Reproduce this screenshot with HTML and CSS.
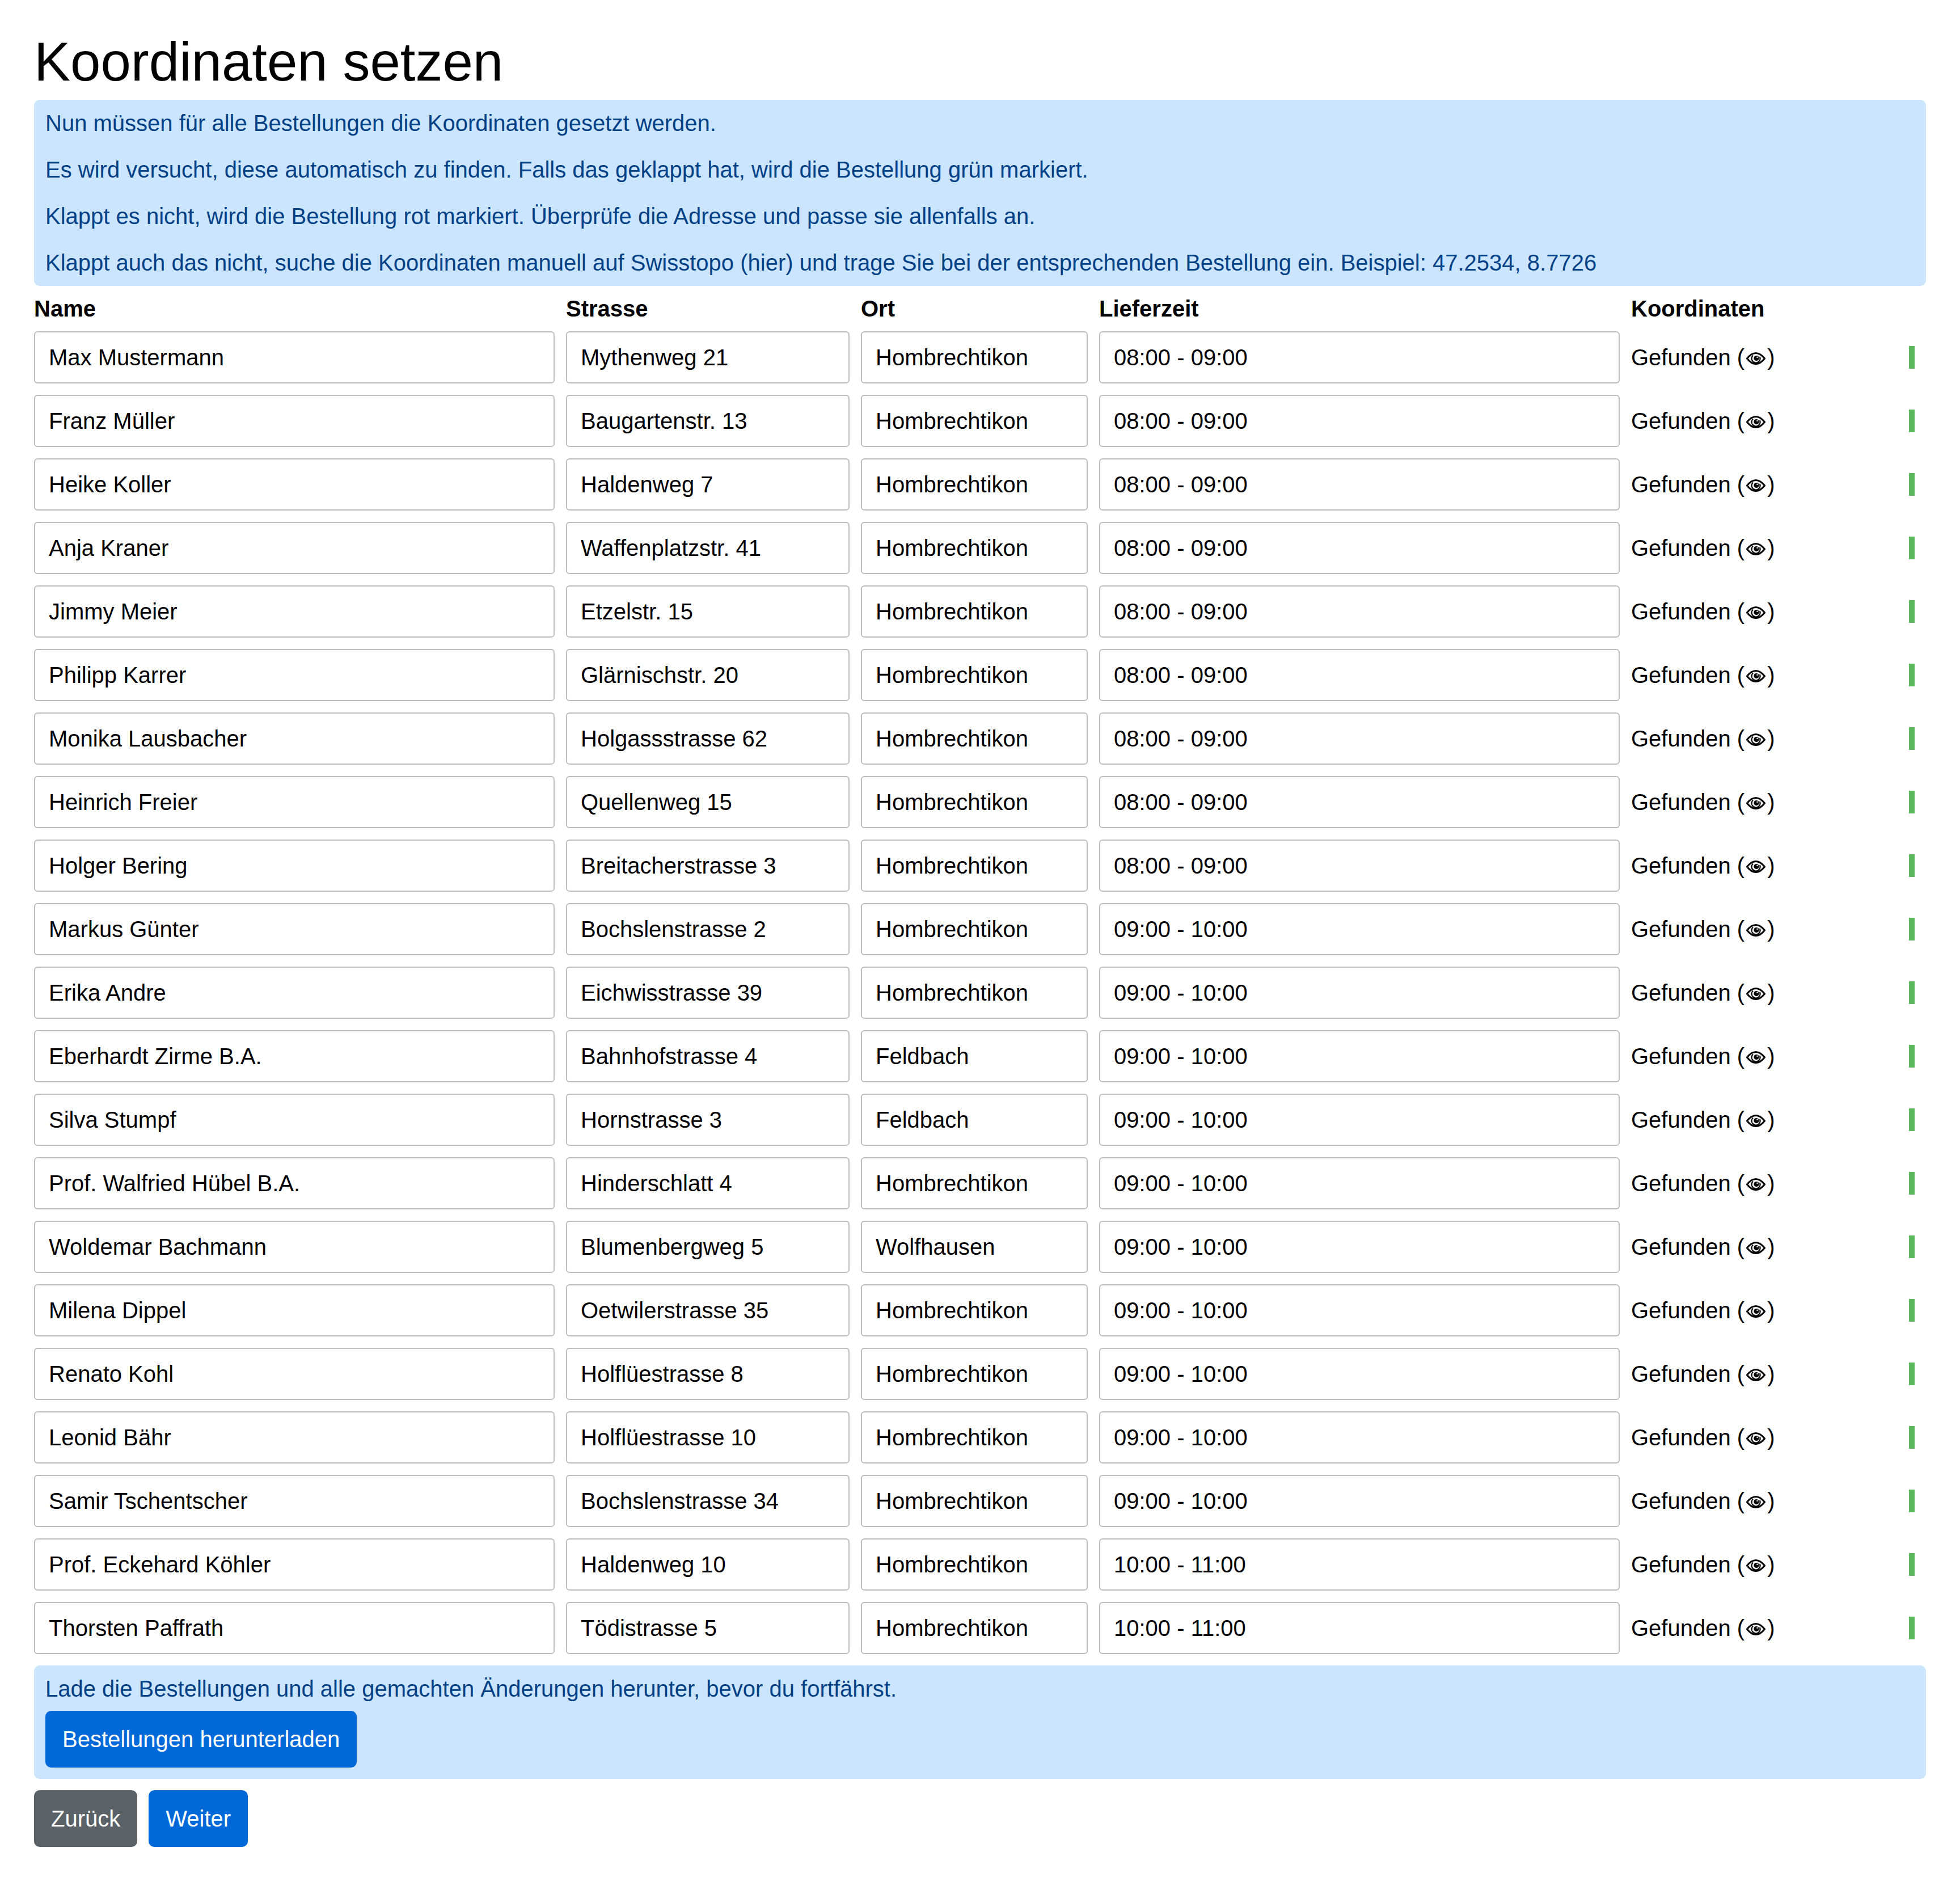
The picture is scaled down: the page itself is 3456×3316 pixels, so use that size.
FILE: index.html
```html
<!DOCTYPE html>
<html lang="de">
<head>
  <meta charset="UTF-8">
  <title>Koordinaten setzen</title>
  <link rel="stylesheet" href="styles.css">
</head>
<body>

  <svg class="icon-defs" width="0" height="0">
    <symbol id="eye" viewBox="0 0 34 22">
      <path d="M1.5 11C7 4 12 1.5 17 1.5S27 4 32.5 11C27 18 22 20.5 17 20.5S7 18 1.5 11Z" fill="none" stroke="#000" stroke-width="3"/>
      <path d="M12 5.5A7.5 7.5 0 1 0 24 8" fill="none" stroke="#000" stroke-width="2.2"/>
      <circle cx="18" cy="10.5" r="4.6" fill="#000"/>
      <circle cx="19.5" cy="8.8" r="1.2" fill="#fff"/>
    </symbol>
  </svg>

  <h1>Koordinaten setzen</h1>

  <div class="alert">
    <p>Nun müssen für alle Bestellungen die Koordinaten gesetzt werden.</p>
    <p>Es wird versucht, diese automatisch zu finden. Falls das geklappt hat, wird die Bestellung grün markiert.</p>
    <p>Klappt es nicht, wird die Bestellung rot markiert. Überprüfe die Adresse und passe sie allenfalls an.</p>
    <p>Klappt auch das nicht, suche die Koordinaten manuell auf Swisstopo (hier) und trage Sie bei der entsprechenden Bestellung ein. Beispiel: 47.2534, 8.7726</p>
  </div>

  <div class="orders">
    <div class="order order-head"><b>Name</b><b>Strasse</b><b>Ort</b><b>Lieferzeit</b><b>Koordinaten</b></div>

    <div class="order"><div class="field">Max Mustermann</div><div class="field">Mythenweg 21</div><div class="field">Hombrechtikon</div><div class="field">08:00 - 09:00</div><div class="found">Gefunden (<svg class="eye"><use href="#eye"/></svg>)</div><i class="status"></i></div>
    <div class="order"><div class="field">Franz Müller</div><div class="field">Baugartenstr. 13</div><div class="field">Hombrechtikon</div><div class="field">08:00 - 09:00</div><div class="found">Gefunden (<svg class="eye"><use href="#eye"/></svg>)</div><i class="status"></i></div>
    <div class="order"><div class="field">Heike Koller</div><div class="field">Haldenweg 7</div><div class="field">Hombrechtikon</div><div class="field">08:00 - 09:00</div><div class="found">Gefunden (<svg class="eye"><use href="#eye"/></svg>)</div><i class="status"></i></div>
    <div class="order"><div class="field">Anja Kraner</div><div class="field">Waffenplatzstr. 41</div><div class="field">Hombrechtikon</div><div class="field">08:00 - 09:00</div><div class="found">Gefunden (<svg class="eye"><use href="#eye"/></svg>)</div><i class="status"></i></div>
    <div class="order"><div class="field">Jimmy Meier</div><div class="field">Etzelstr. 15</div><div class="field">Hombrechtikon</div><div class="field">08:00 - 09:00</div><div class="found">Gefunden (<svg class="eye"><use href="#eye"/></svg>)</div><i class="status"></i></div>
    <div class="order"><div class="field">Philipp Karrer</div><div class="field">Glärnischstr. 20</div><div class="field">Hombrechtikon</div><div class="field">08:00 - 09:00</div><div class="found">Gefunden (<svg class="eye"><use href="#eye"/></svg>)</div><i class="status"></i></div>
    <div class="order"><div class="field">Monika Lausbacher</div><div class="field">Holgassstrasse 62</div><div class="field">Hombrechtikon</div><div class="field">08:00 - 09:00</div><div class="found">Gefunden (<svg class="eye"><use href="#eye"/></svg>)</div><i class="status"></i></div>
    <div class="order"><div class="field">Heinrich Freier</div><div class="field">Quellenweg 15</div><div class="field">Hombrechtikon</div><div class="field">08:00 - 09:00</div><div class="found">Gefunden (<svg class="eye"><use href="#eye"/></svg>)</div><i class="status"></i></div>
    <div class="order"><div class="field">Holger Bering</div><div class="field">Breitacherstrasse 3</div><div class="field">Hombrechtikon</div><div class="field">08:00 - 09:00</div><div class="found">Gefunden (<svg class="eye"><use href="#eye"/></svg>)</div><i class="status"></i></div>
    <div class="order"><div class="field">Markus Günter</div><div class="field">Bochslenstrasse 2</div><div class="field">Hombrechtikon</div><div class="field">09:00 - 10:00</div><div class="found">Gefunden (<svg class="eye"><use href="#eye"/></svg>)</div><i class="status"></i></div>
    <div class="order"><div class="field">Erika Andre</div><div class="field">Eichwisstrasse 39</div><div class="field">Hombrechtikon</div><div class="field">09:00 - 10:00</div><div class="found">Gefunden (<svg class="eye"><use href="#eye"/></svg>)</div><i class="status"></i></div>
    <div class="order"><div class="field">Eberhardt Zirme B.A.</div><div class="field">Bahnhofstrasse 4</div><div class="field">Feldbach</div><div class="field">09:00 - 10:00</div><div class="found">Gefunden (<svg class="eye"><use href="#eye"/></svg>)</div><i class="status"></i></div>
    <div class="order"><div class="field">Silva Stumpf</div><div class="field">Hornstrasse 3</div><div class="field">Feldbach</div><div class="field">09:00 - 10:00</div><div class="found">Gefunden (<svg class="eye"><use href="#eye"/></svg>)</div><i class="status"></i></div>
    <div class="order"><div class="field">Prof. Walfried Hübel B.A.</div><div class="field">Hinderschlatt 4</div><div class="field">Hombrechtikon</div><div class="field">09:00 - 10:00</div><div class="found">Gefunden (<svg class="eye"><use href="#eye"/></svg>)</div><i class="status"></i></div>
    <div class="order"><div class="field">Woldemar Bachmann</div><div class="field">Blumenbergweg 5</div><div class="field">Wolfhausen</div><div class="field">09:00 - 10:00</div><div class="found">Gefunden (<svg class="eye"><use href="#eye"/></svg>)</div><i class="status"></i></div>
    <div class="order"><div class="field">Milena Dippel</div><div class="field">Oetwilerstrasse 35</div><div class="field">Hombrechtikon</div><div class="field">09:00 - 10:00</div><div class="found">Gefunden (<svg class="eye"><use href="#eye"/></svg>)</div><i class="status"></i></div>
    <div class="order"><div class="field">Renato Kohl</div><div class="field">Holflüestrasse 8</div><div class="field">Hombrechtikon</div><div class="field">09:00 - 10:00</div><div class="found">Gefunden (<svg class="eye"><use href="#eye"/></svg>)</div><i class="status"></i></div>
    <div class="order"><div class="field">Leonid Bähr</div><div class="field">Holflüestrasse 10</div><div class="field">Hombrechtikon</div><div class="field">09:00 - 10:00</div><div class="found">Gefunden (<svg class="eye"><use href="#eye"/></svg>)</div><i class="status"></i></div>
    <div class="order"><div class="field">Samir Tschentscher</div><div class="field">Bochslenstrasse 34</div><div class="field">Hombrechtikon</div><div class="field">09:00 - 10:00</div><div class="found">Gefunden (<svg class="eye"><use href="#eye"/></svg>)</div><i class="status"></i></div>
    <div class="order"><div class="field">Prof. Eckehard Köhler</div><div class="field">Haldenweg 10</div><div class="field">Hombrechtikon</div><div class="field">10:00 - 11:00</div><div class="found">Gefunden (<svg class="eye"><use href="#eye"/></svg>)</div><i class="status"></i></div>
    <div class="order"><div class="field">Thorsten Paffrath</div><div class="field">Tödistrasse 5</div><div class="field">Hombrechtikon</div><div class="field">10:00 - 11:00</div><div class="found">Gefunden (<svg class="eye"><use href="#eye"/></svg>)</div><i class="status"></i></div>
  </div>

  <div class="alert alert-download">
    <p>Lade die Bestellungen und alle gemachten Änderungen herunter, bevor du fortfährst.</p>
    <button class="btn btn-primary">Bestellungen herunterladen</button>
  </div>

  <div class="actions">
    <button class="btn btn-secondary">Zurück</button>
    <button class="btn btn-primary">Weiter</button>
  </div>

</body>
</html>
```

FILE: styles.css
```css
body {
  font-family: "Liberation Sans", Arial, sans-serif;
  font-size: 40px;
  line-height: 60px;
  color: #000;
  background-color: #fff;
  margin: 0;
  padding: 49px 60px 60px;
}
.icon-defs {
  position: absolute;
}
h1 {
  font-size: 96px;
  font-weight: 400;
  line-height: 120px;
  margin: 0 0 7px;
}
.alert {
  background-color: #cce5ff;
  color: #004085;
  padding: 11px 20px;
  border-radius: 10px;
}
.alert p {
  margin: 0 0 22px;
}
.alert p:last-child {
  margin-bottom: 0;
}
.orders {
  display: flex;
  flex-direction: column;
  gap: 20px;
  margin: 10px 0 20px;
}
.order {
  display: grid;
  grid-template-columns: 918px 500px 400px 918px 1fr 10px;
  column-gap: 20px;
  align-items: center;
  padding-right: 20px;
}
.order-head {
  margin-bottom: -10px;
}
.field {
  box-sizing: border-box;
  height: 92px;
  line-height: 88px;
  padding: 0 24px;
  border: 2px solid #bdbdb8;
  border-radius: 6px;
}
.found {
  white-space: nowrap;
}
.eye {
  width: 34px;
  height: 22px;
  margin: 0 3px;
  vertical-align: 1px;
}
.status {
  display: block;
  width: 10px;
  height: 40px;
  background-color: #5cb85c;
}
.btn {
  font: inherit;
  height: 100px;
  padding: 0 30px;
  border: none;
  border-radius: 10px;
  color: #fff;
}
.btn-primary {
  background-color: #0069d9;
}
.btn-secondary {
  background-color: #5a6268;
}
.alert-download {
  padding-bottom: 20px;
}
.alert-download p {
  margin-bottom: 9px;
}
.alert-download .btn {
  display: block;
}
.actions {
  display: flex;
  gap: 20px;
  margin-top: 20px;
}
```
